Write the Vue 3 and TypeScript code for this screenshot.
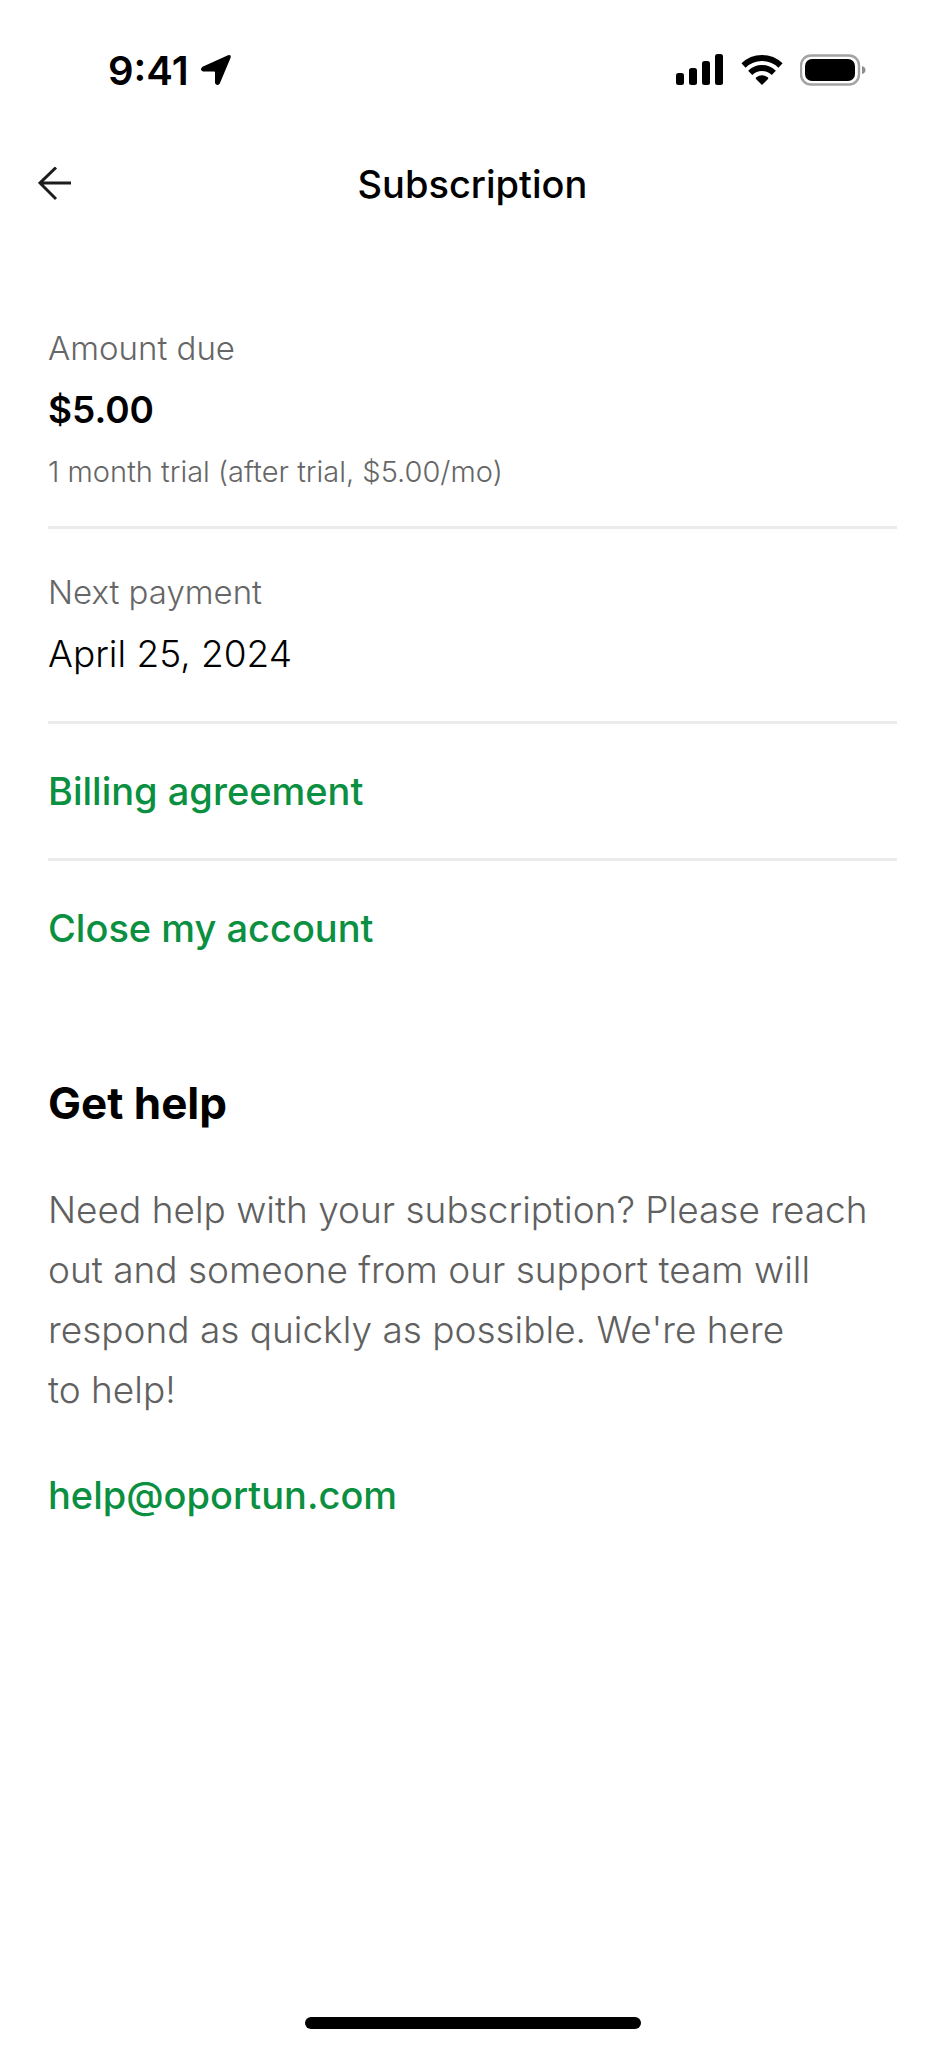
<script setup lang="ts">
interface Row {
  label: string
  value: string
  strong?: boolean
  note?: string
}

const rows: Row[] = [
  { label: 'Amount due', value: '$5.00', strong: true, note: '1 month trial (after trial, $5.00/mo)' },
  { label: 'Next payment', value: 'April 25, 2024' },
]

const actions: string[] = ['Billing agreement', 'Close my account']
</script>

<template>
  <div class="screen">
    <div class="status">
      <div class="clock">
        <span>9:41</span>
        <svg width="34" height="34" viewBox="0 0 34 34" aria-hidden="true">
          <path d="M3.5 13.800 29 2.200q3.400-.8 2.600 2.600L20.800 30.500q-2.600 3.200-4.800-.2V19.300q0-.9-.9-.9H4q-4-1.200-.5-4.600Z" />
        </svg>
      </div>
      <div class="signals">
        <svg width="48" height="32" viewBox="0 0 48 32" aria-hidden="true">
          <rect x="0" y="19" width="8" height="12" rx="2.5" />
          <rect x="13" y="14" width="8" height="17" rx="2.5" />
          <rect x="26" y="7" width="8" height="24" rx="2.5" />
          <rect x="39" y="0" width="8" height="31" rx="2.5" />
        </svg>
        <svg width="42" height="32" viewBox="0 0 42 32" aria-hidden="true">
          <g fill="none" stroke="#000" stroke-width="6">
            <path d="M2.5 11.5a26.5 26.5 0 0 1 37 0" />
            <path d="M9.2 18.8a17 17 0 0 1 23.6 0" />
          </g>
          <path d="M21 31 15 25q-.7-1 .3-1.700a9.500 9.500 0 0 1 11.400 0q1 .7.3 1.700Z" />
        </svg>
        <svg width="66" height="32" viewBox="0 0 66 32" aria-hidden="true">
          <rect x="1" y="1.500" width="58" height="29" rx="10" fill="none" stroke="#a3a3a3" stroke-width="2.400" />
          <rect x="5" y="5" width="50" height="22" rx="7" />
          <path d="M62 12q3.500 1 3.500 4t-3.500 4Z" fill="#8e8e8e" />
        </svg>
      </div>
    </div>

    <header class="header">
      <button class="back" type="button" aria-label="Back">
        <svg width="34" height="34" viewBox="0 0 34 34" aria-hidden="true">
          <path d="M33 16H2M18 0.500 2 16 18 32" fill="none" stroke="#1c1c1c" stroke-width="3" />
        </svg>
      </button>
      <h1>Subscription</h1>
    </header>

    <main>
      <section v-for="row in rows" :key="row.label" class="row" :class="{ noted: row.note }">
        <p class="label">{{ row.label }}</p>
        <p class="value" :class="{ strong: row.strong }">{{ row.value }}</p>
        <p v-if="row.note" class="note">{{ row.note }}</p>
      </section>
      <button v-for="action in actions" :key="action" class="action" type="button">{{ action }}</button>

      <section class="help">
        <h2>Get help</h2>
        <p>
          Need help with your subscription? Please reach out and someone from our support team will respond as quickly
          as possible. We're here to&nbsp;help!
        </p>
        <a href="mailto:help@oportun.com">help@oportun.com</a>
      </section>
    </main>

    <div class="home"></div>
  </div>
</template>

<style>
body {
  margin: 0;
  background: #fff;
}
</style>

<style scoped>
.screen {
  display: flex;
  flex-direction: column;
  min-height: 100vh;
  box-sizing: border-box;
  background: #fff;
  color: #000;
  font-family: Inter, "Liberation Sans", sans-serif;
  font-size: 37px;
  font-weight: 300;
}

h1,
h2,
p {
  margin: 0;
}

svg {
  display: block;
}

.status {
  display: flex;
  justify-content: space-between;
  align-items: center;
  height: 140px;
  padding: 0 79px 0 108px;
}

.clock {
  display: flex;
  align-items: center;
  gap: 10px;
  font-size: 40px;
  font-weight: 600;
}

.signals {
  display: flex;
  align-items: center;
  gap: 17px;
}

.header {
  display: grid;
  grid-template-columns: 88px 1fr 88px;
  align-items: center;
  height: 88px;
}

.back {
  justify-self: start;
  margin-left: 32px;
  padding: 6px;
  border: 0;
  background: none;
}

h1 {
  font-size: 38px;
  font-weight: 500;
  text-align: center;
}

main {
  padding: 57px 48px 0;
}

.row {
  padding: 32px 0 36px;
  border-bottom: 3px solid #ebebeb;
  line-height: 62px;
}

.row.noted {
  padding-bottom: 23px;
}

.label {
  color: #666;
  font-size: 33px;
}

.strong {
  font-weight: 600;
}

.note {
  color: #666;
  font-size: 29px;
}

.action {
  display: block;
  width: 100%;
  padding: 36px 0;
  border: 0;
  border-bottom: 3px solid #ebebeb;
  background: none;
  color: #0a9040;
  font: inherit;
  font-size: 38px;
  font-weight: 500;
  line-height: 62px;
  text-align: left;
}

.action:last-of-type {
  border-bottom: 0;
}

.help {
  padding-top: 78px;
  line-height: 60px;
}

h2 {
  font-size: 44px;
  font-weight: 700;
}

.help p {
  margin: 47px 0 45px;
  color: #606060;
}

.help a {
  color: #0a9040;
  font-size: 38px;
  font-weight: 500;
  text-decoration: none;
}

.home {
  width: 336px;
  height: 12px;
  margin: auto auto 20px;
  border-radius: 6px;
  background: #000;
}
</style>
